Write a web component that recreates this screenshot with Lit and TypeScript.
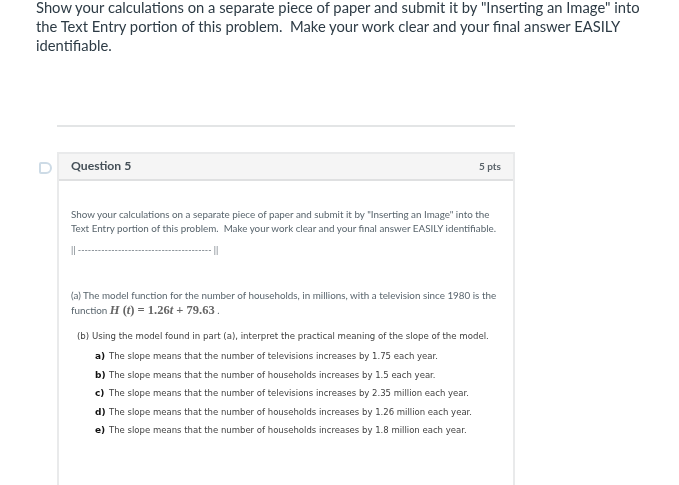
import { LitElement, html, css } from "lit";
import { customElement } from "lit/decorators.js";

const choices = [
  ["a)", "The slope means that the number of televisions increases by 1.75 each year."],
  ["b)", "The slope means that the number of households increases by 1.5 each year."],
  ["c)", "The slope means that the number of televisions increases by 2.35 million each year."],
  ["d)", "The slope means that the number of households increases by 1.26 million each year."],
  ["e)", "The slope means that the number of households increases by 1.8 million each year."],
];

const introLines = [
  'Show your calculations on a separate piece of paper and submit it by "Inserting an Image" into',
  "the Text Entry portion of this problem.\u00a0 Make your work clear and your final answer EASILY",
  "identifiable.",
];

@customElement("app-root")
export class AppRoot extends LitElement {
  static styles = css`
    :host { display: block; width: 679px; height: 485px; overflow: hidden; background: #fff; font-family: Lato, sans-serif; }
    .intro { display: grid; row-gap: 4px; padding: 0 30px 0 36px; font-size: 14.77px; line-height: 15px; color: #2d3b45; filter: blur(0.25px); }
    .intro span { white-space: nowrap; }
    .rule { height: 2px; background: #e3e5e6; margin: 72px 164px 0 57px; filter: blur(0.4px); }
    .row { display: flex; align-items: flex-start; margin-top: 25px; }
    .flag { width: 13px; height: 12px; margin: 10px 5px 0 39px; border: 2px solid #cddbe6; border-radius: 2px 6px 6px 2px; box-sizing: border-box; flex: none; filter: blur(0.5px); }
    .card { width: 458px; height: 340px; box-sizing: border-box; border: 2px solid #e9eaeb; border-bottom: 0; flex: none; }
    .head { display: flex; justify-content: space-between; align-items: center; height: 27px; box-sizing: border-box; padding: 0 12px 2px; background: #f5f5f5; border-bottom: 2px solid #dfe0e1; color: #444f57; }
    .qname { font-size: 12.2px; font-weight: 700; filter: blur(0.45px); }
    .pts { font-size: 10px; font-weight: 700; color: #5a636a; filter: blur(0.45px); }
    .body { padding: 26px 12px 0; color: #59656d; filter: blur(0.5px); }
    .p { margin: 0; font-size: 9.83px; line-height: 14px; white-space: nowrap; }
    .bars { margin: 8px 0 0; font-size: 9px; line-height: 14px; height: 14px; white-space: nowrap; color: #6b757c; }
    .part-a { margin: 31px 0 0; font-size: 9.85px; line-height: 15px; white-space: nowrap; }
    .math { font-family: "Liberation Serif", serif; font-size: 12.5px; font-weight: 700; color: #666; }
    .part-b { margin: 11px 0 0 6px; font-family: "DejaVu Sans", sans-serif; font-size: 8.6px; line-height: 14px; white-space: nowrap; color: #3d3d3d; }
    .choices { display: grid; row-gap: 4.5px; margin: 6px 0 0 24px; font-family: "DejaVu Sans", sans-serif; font-size: 8.53px; line-height: 14px; color: #3f3f3f; }
    .choice { display: flex; gap: 3px; white-space: nowrap; }
    .choice b { width: 11px; font-size: 9px; color: #111; }
  `;

  render() {
    return html`
      <div class="intro">${introLines.map((l) => html`<span>${l}</span>`)}</div>
      <div class="rule"></div>
      <div class="row">
        <div class="flag"></div>
        <section class="card">
          <header class="head"><span class="qname">Question 5</span><span class="pts">5 pts</span></header>
          <div class="body">
            <p class="p">Show your calculations on a separate piece of paper and submit it by "Inserting an Image" into the<br />Text Entry portion of this problem.&nbsp; Make your work clear and your final answer EASILY identifiable.</p>
            <p class="bars">|| ---------------------------------------- ||</p>
            <p class="part-a">(a) The model function for the number of households, in millions, with a television since 1980 is the<br />function <span class="math"><i>H</i> (<i>t</i>) = 1.26<i>t</i> + 79.63</span> .</p>
            <p class="part-b">(b) Using the model found in part (a), interpret the practical meaning of the slope of the model.</p>
            <div class="choices">
              ${choices.map(([k, t]) => html`<div class="choice"><b>${k}</b><span>${t}</span></div>`)}
            </div>
          </div>
        </section>
      </div>
    `;
  }
}
